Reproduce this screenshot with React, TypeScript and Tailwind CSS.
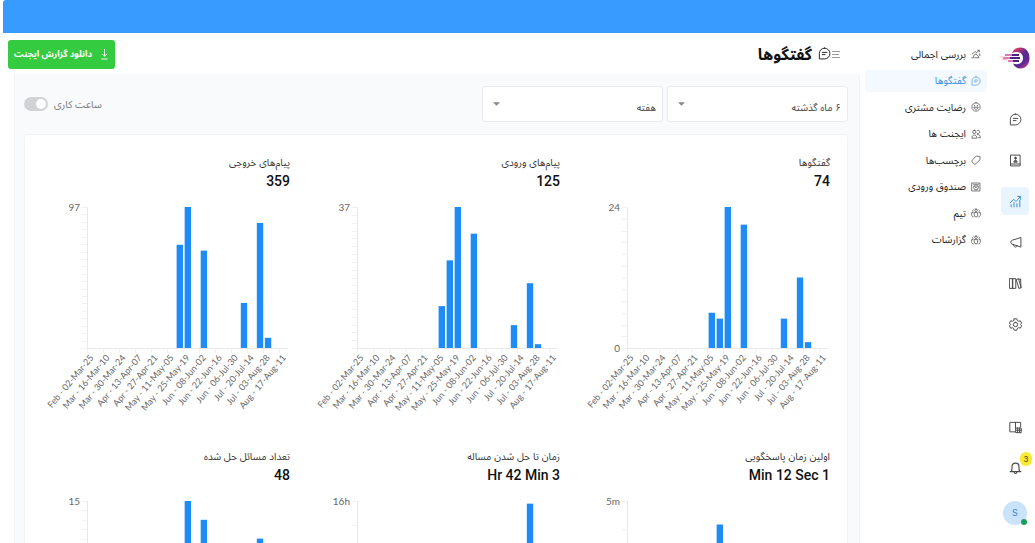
import React from "react";

type Bar = [slot: number, value: number];

interface Metric {
  title: string;
  value: string;
  top: string;
  max: number;
  ticks: number;
  bars: Bar[];
}

const weeks = [
  "Feb - 02-Mar-25",
  "Mar - 16-Mar-10",
  "Mar - 30-Mar-24",
  "Apr - 13-Apr-07",
  "Apr - 27-Apr-21",
  "May - 11-May-05",
  "May - 25-May-19",
  "Jun - 08-Jun-02",
  "Jun - 22-Jun-16",
  "Jun - 06-Jul-30",
  "Jul - 20-Jul-14",
  "Jul - 03-Aug-28",
  "Aug - 17-Aug-11",
];

const metrics: Metric[] = [
  { title: "گفتگوها", value: "74", top: "24", max: 24, ticks: 12, bars: [[10, 6], [11, 5], [12, 24], [14, 21], [19, 5], [21, 12], [22, 1]] },
  { title: "پیام‌های ورودی", value: "125", top: "37", max: 37, ticks: 18, bars: [[10, 11], [11, 23], [12, 37], [14, 30], [19, 6], [21, 17], [22, 1]] },
  { title: "پیام‌های خروجی", value: "359", top: "97", max: 97, ticks: 19, bars: [[11, 71], [12, 97], [14, 67], [19, 31], [21, 86], [22, 7]] },
  { title: "اولین زمان پاسخگویی", value: "Min 12 Sec 1", top: "5m", max: 300, ticks: 5, bars: [[11, 250]] },
  { title: "زمان تا حل شدن مساله", value: "Hr 42 Min 3", top: "16h", max: 16, ticks: 6, bars: [[21, 15.7]] },
  { title: "تعداد مسائل حل شده", value: "48", top: "15", max: 15, ticks: 15, bars: [[12, 15], [14, 13], [21, 11]] },
];

const PLOT_LEFT = 51;
const PLOT_TOP = 10;
const PLOT_HEIGHT = 141;
const SLOT = 8.02;

function Chart({ metric }: { metric: Metric }) {
  const bottom = PLOT_TOP + PLOT_HEIGHT;
  return (
    <svg viewBox="0 0 254 220" className="mt-[7px] block w-full font-['Lato',sans-serif]" direction="ltr" role="img" aria-label={metric.title}>
      <g stroke="#f1f1f1" strokeWidth="1">
        {Array.from({ length: metric.ticks + 1 }, (_, i) => {
          const y = Math.round(PLOT_TOP + (PLOT_HEIGHT * i) / metric.ticks) + 0.5;
          return <path key={i} d={`M${PLOT_LEFT - 5} ${y}H${PLOT_LEFT}`} />;
        })}
        {weeks.map((w, i) => {
          const x = Math.round(PLOT_LEFT + i * SLOT * 2) + 0.5;
          return <path key={w} d={`M${x} ${bottom}v5`} />;
        })}
        <path d={`M${PLOT_LEFT}.5 ${PLOT_TOP}V${bottom}.5H252`} fill="none" stroke="#e9e9e9" />
      </g>
      {metric.bars.map(([slot, value]) => {
        const h = (value / metric.max) * PLOT_HEIGHT;
        return <rect key={slot} x={PLOT_LEFT + 1.4 + slot * SLOT} y={bottom - h} width="6.4" height={h} fill="#1f8cf5" />;
      })}
      <g fill="#666" fontSize="10" textAnchor="end">
        <text x={PLOT_LEFT - 7} y={PLOT_TOP + 4}>{metric.top}</text>
        {metric.top === "24" && <text x={PLOT_LEFT - 7} y={bottom + 4}>0</text>}
        {weeks.map((w, i) => {
          const x = PLOT_LEFT + 7 + i * SLOT * 2;
          return (
            <text key={w} x={x} y={bottom + 10} fontSize="9" transform={`rotate(-50 ${x} ${bottom + 10})`}>
              {w}
            </text>
          );
        })}
      </g>
    </svg>
  );
}

type IconName =
  | "overview" | "chat" | "smile" | "agents" | "tag" | "inbox" | "team"
  | "contact" | "chart" | "megaphone" | "library" | "gear" | "panel" | "bell";

const shapes: Record<IconName, React.ReactNode> = {
  overview: <path d="M2 21h4l1-6 5-3 5 4 2 5H9M3 12l7-6 4 3 5-6M16 3h4v4M21 11v5" />,
  chat: <path d="M12 2a10 10 0 1 1 0 20H2.500V12A9.700 9.700 0 0 1 12 2zM8 10h8.500M8 14h5" />,
  smile: <path d="M12 2a10 10 0 1 0 0 20 10 10 0 0 0 0-20zM7 13.500c1 5.500 9 5.500 10 0zM8.500 8v2M15.500 8v2" />,
  agents: <path d="M8 3a4 4 0 1 0 0 8 4 4 0 0 0 0-8zM15.500 3.500a4 4 0 1 1 0 7.500M2 21c0-9 12-9 12 0zM15 13.500c5-1 7.500 2 7.500 7.500h-5" />,
  tag: <path d="M20.500 3.500l-8-1L3 12.500a3.500 3.500 0 0 0 0 4.500l4 4a3.500 3.500 0 0 0 4.500 0L21 12z" />,
  inbox: <path d="M2.500 2.500h19v19h-19zM6.500 6.500h11M6.500 10.500v3a5.500 5.500 0 0 0 11 0v-3zM10 12l2 2 2-2" />,
  team: <path d="M12 2.500a3 3 0 1 0 0 6 3 3 0 0 0 0-6zM8 11h8v6.500a4 4 0 0 1-8 0zM5.500 4a3 3 0 0 0-1 4.500M18.500 4a3 3 0 0 1 1 4.500M4.500 11H1.500v5c0 3 1.500 5 4 5.500M19.500 11h3v5c0 3-1.500 5-4 5.500" />,
  contact: (
    <>
      <path d="M3.500 2h17v20h-17zM3.500 18.500h17" />
      <path d="M12 6a1.800 1.800 0 1 0 0 3.600A1.800 1.800 0 0 0 12 6zM9 14.500c0-4 6-4 6 0z" fill="currentColor" />
    </>
  ),
  chart: <path d="M4 22v-4M9.300 22v-8M14.600 22v-6M20 22V10M2.500 14L9 8l4 4 8-9M16 2.500h5.500V8" />,
  megaphone: <path d="M22 3.500v17L5.500 15a3.800 3.800 0 0 1 0-7zM8.500 16.500c0 5 5.500 5.500 6.500 1.500" />,
  library: <path d="M1.500 3H7v18H1.500zM7 3h5.500v18H7zM14 4.500L17.500 3l5 16.500L19 21zM18 4.500l3.500-1L22 20" />,
  gear: <path d="M9.500 1.500h5l.9 3.200 2.300 1.300 3.200-.8 2.400 4.200L21 12l2.300 2.500-2.400 4.200-3.200-.8-2.300 1.300-.9 3.300h-5l-.9-3.300L6.300 18l-3.200.8-2.400-4.300L3 12 .7 9.400l2.400-4.200 3.200.8 2.300-1.300zM12 8a4 4 0 1 0 0 8 4 4 0 0 0 0-8z" />,
  panel: (
    <>
      <path d="M11 20H1.500V2.500h20V11M12 2.500V13" />
      <path d="M13 13h9.500v8.500H13zM16 13v8.500M19.500 13v8.500M13 17h9.500" />
    </>
  ),
  bell: <path d="M3.500 18.500h17M5.500 18.500c1-2 1-4 1-8a5.500 5.500 0 0 1 11 0c0 4 0 6 1 8M10 19.500a2 2 0 0 0 4 0" />,
};

function Icon({ name, className }: { name: IconName; className: string }) {
  return (
    <svg viewBox="0 0 24 24" className={className} fill="none" stroke="currentColor" strokeWidth="1.8" strokeLinejoin="round" strokeLinecap="round" aria-hidden="true">
      {shapes[name]}
    </svg>
  );
}

function Logo() {
  return (
    <svg viewBox="0 0 30 22" className="h-[22px] w-[30px]" fill="none" aria-hidden="true">
      <defs>
        <linearGradient id="logo" x1="0.2" y1="0" x2=".8" y2="1">
          <stop offset="0" stopColor="#f0405f" />
          <stop offset=".4" stopColor="#5b2a94" />
          <stop offset=".75" stopColor="#5b2a94" />
          <stop offset="1" stopColor="#e23f70" />
        </linearGradient>
      </defs>
      <path d="M12 6C14 1.500 17.500.5 20.500.5c5.500 0 9 4.500 9 10.500s-3.500 10.500-9 10.500c-3.500 0-6-1.500-7.500-5 5.500 2 10-.5 10-5.500S18 3.500 12 6z" fill="url(#logo)" />
      <path d="M5 8h10M3 11h12M8 14h8" stroke="#d0509b" strokeWidth="1.400" />
      <path d="M12 8h7M10 11h10M13 14h6" stroke="#4a2484" strokeWidth="1.800" />
      <path d="M0 10h5M2 12.500h5" stroke="#f3a8b4" strokeWidth=".8" />
    </svg>
  );
}

const sections: { icon: IconName; label: string; active?: boolean }[] = [
  { icon: "overview", label: "بررسی اجمالی" },
  { icon: "chat", label: "گفتگوها", active: true },
  { icon: "smile", label: "رضایت مشتری" },
  { icon: "agents", label: "ایجنت ها" },
  { icon: "tag", label: "برچسب‌ها" },
  { icon: "inbox", label: "صندوق ورودی" },
  { icon: "team", label: "تیم" },
  { icon: "team", label: "گزارشات" },
];

const rail: { icon: IconName; label: string; active?: boolean }[] = [
  { icon: "chat", label: "مکالمات" },
  { icon: "contact", label: "مخاطبین" },
  { icon: "chart", label: "گزارش‌ها", active: true },
  { icon: "megaphone", label: "کمپین‌ها" },
  { icon: "library", label: "مرکز راهنما" },
  { icon: "gear", label: "تنظیمات" },
];

function Select({ label, value }: { label: string; value: string }) {
  return (
    <div className="relative w-[181px]">
      <select aria-label={label} className="h-9 w-full appearance-none rounded-[3px] border border-[#e9ebee] bg-white pt-[6px] pr-[6px] pl-7 text-[10px] text-[#444]">
        <option>{value}</option>
      </select>
      <svg viewBox="0 0 8 4" className="pointer-events-none absolute top-4 left-[11px] h-1 w-[7px]" aria-hidden="true">
        <path d="M0 0h8L4 4z" fill="#888" />
      </svg>
    </div>
  );
}

export default function App() {
  return (
    <div dir="rtl" className="flex h-screen flex-col overflow-hidden bg-white font-['Inter','Noto_Sans_Arabic','DejaVu_Sans',sans-serif] text-[#222]">
      <div className="ml-[3px] h-[33px] shrink-0 rounded-tl-[3px] bg-[#379bff]" />
      <div className="flex min-h-0 flex-1">
        <aside className="flex w-10 shrink-0 flex-col items-center pt-[14px] pb-[18px]">
          <a href="#home" aria-label="خانه">
            <Logo />
          </a>
          <nav className="mt-9 flex flex-col gap-[13px]">
            {rail.map((r) => (
              <a
                key={r.icon}
                href={`#${r.icon}`}
                aria-label={r.label}
                className={r.active ? "flex size-7 items-center justify-center rounded-[4px] bg-[#e8f4ff] text-[#3b8fd0]" : "flex size-7 items-center justify-center text-[#4a4a4a]"}
              >
                <Icon name={r.icon} className="size-[13px]" />
              </a>
            ))}
          </nav>
          <div className="mt-auto flex flex-col items-center gap-3">
            <button aria-label="راهنما" className="flex size-7 items-center justify-center text-[#4a4a4a]">
              <Icon name="panel" className="size-[13px]" />
            </button>
            <button aria-label="اعلان‌ها" className="relative flex size-7 items-center justify-center text-[#4a4a4a]">
              <Icon name="bell" className="size-[15px]" />
              <span className="absolute -top-[1px] -right-[3px] flex h-[14px] w-3 items-center justify-center rounded-full bg-[#fbe92f] text-[8px] text-[#444]">3</span>
            </button>
            <button aria-label="پروفایل" className="relative mt-2 flex size-6 items-center justify-center rounded-full bg-[#c9e3fa] text-[9px] text-[#3a86c4]">
              S
              <span className="absolute right-0 bottom-0 size-[6px] rounded-full bg-[#18a05a]" />
            </button>
          </div>
        </aside>

        <div className="w-[135px] shrink-0 pt-[10px] pr-2 pl-[5px]">
          <nav className="flex h-[208px] flex-col justify-between">
            {sections.map((s) => (
              <a
                key={s.label}
                href={`#${s.label}`}
                className={s.active ? "flex h-[22px] items-center gap-[5px] rounded-[4px] bg-[#f4f9ff] px-[6px] text-[10px] text-[#2f8fe0]" : "flex h-[22px] items-center gap-[5px] px-[6px] text-[10px] text-[#222]"}
              >
                <Icon name={s.icon} className="size-[10px] shrink-0 opacity-80" />
                <span className="whitespace-nowrap">{s.label}</span>
              </a>
            ))}
          </nav>
        </div>

        <main className="flex min-w-0 flex-1 flex-col">
          <header className="flex h-[41px] shrink-0 items-center justify-between pr-[19px] pl-2">
            <div className="flex items-center">
              <svg viewBox="0 0 10 10" className="size-[10px]" stroke="#999" strokeWidth="1" aria-hidden="true">
                <path d="M1 2.500h8M1 5.500h7M1 8.500h8" />
              </svg>
              <Icon name="chat" className="size-[13px]" />
              <h1 className="mr-[6px] text-[16px] font-bold text-[#111]">گفتگوها</h1>
            </div>
            <button className="mt-[1px] flex h-[29px] w-[107px] items-center justify-center gap-2 rounded-[3px] bg-[#35cb41] text-[9px] font-bold whitespace-nowrap text-white">
              <svg viewBox="0 0 10 12" className="h-[11px] w-[9px]" fill="none" stroke="currentColor" aria-hidden="true">
                <path d="M5 0v8M2.500 5.500L5 8l2.500-2.500M1.500 11h7" />
              </svg>
              دانلود گزارش ایجنت
            </button>
          </header>

          <div className="ml-[14px] min-h-0 flex-1 overflow-y-auto border-x border-[#f3f4f6] bg-[#f8fafc] pt-3 pr-[11px] pl-[9px] [scrollbar-width:none]">
            <div className="flex items-center gap-1">
              <Select label="بازه زمانی" value="۶ ماه گذشته" />
              <Select label="گروه‌بندی" value="هفته" />
              <label className="mr-auto flex items-center gap-[6px] text-[10px] text-[#777]">
                ساعت کاری
                <input type="checkbox" role="switch" className="peer sr-only" />
                <span className="flex h-[14px] w-6 items-center rounded-full bg-[#d2d3d6] p-[2px] peer-checked:justify-end peer-checked:bg-[#1f8cf5]">
                  <span className="size-[10px] rounded-full bg-white" />
                </span>
              </label>
            </div>

            <section className="mt-3 grid grid-cols-3 gap-x-4 gap-y-[29px] rounded-[3px] border border-[#f1f3f5] bg-white pt-[17px] pr-[17px] pb-6 pl-[11px]">
              {metrics.map((m) => (
                <article key={m.title} className="min-w-0">
                  <h2 className="h-5 text-[10px] leading-5 whitespace-nowrap text-[#333]">{m.title}</h2>
                  <p dir="ltr" className="h-[18px] text-right font-['Roboto',sans-serif] text-[14px] leading-[18px] font-medium text-[#111]">{m.value}</p>
                  <Chart metric={m} />
                </article>
              ))}
            </section>
          </div>
        </main>
      </div>
    </div>
  );
}
